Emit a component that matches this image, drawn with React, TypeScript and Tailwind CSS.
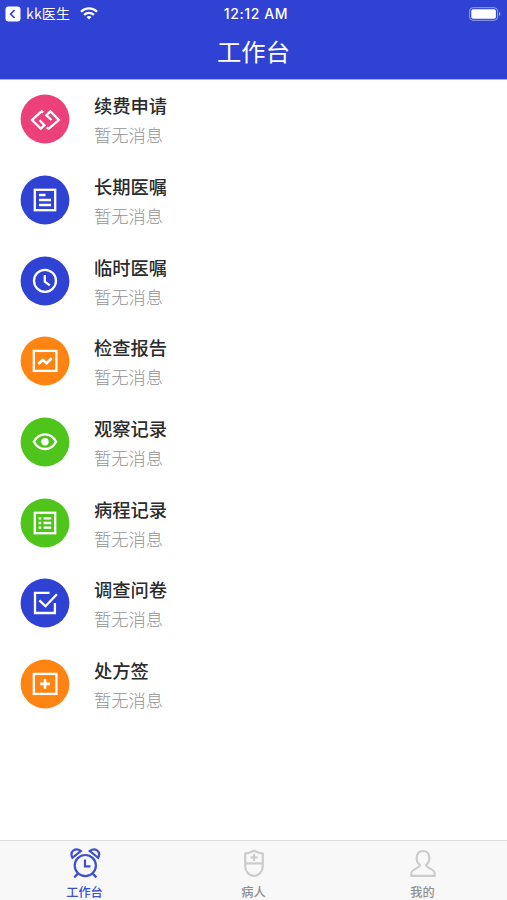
import type { ReactNode } from "react";

type Item = {
  title: string;
  color: string;
  icon: ReactNode;
};

const items: Item[] = [
  {
    title: "续费申请",
    color: "text-[#ec407a]",
    icon: (
      <>
        <path d="M23.2 18.4 L21.6 17.3 L12 26 L20.8 34.6 L24.4 31.2 L19.6 26.2" />
        <path d="M26.6 33.6 L28.8 34.6 L38.8 26 L30.4 17.4 L26.4 21.2 L31.4 26" />
      </>
    ),
  },
  {
    title: "长期医嘱",
    color: "text-[#2f42d3]",
    icon: (
      <>
        <rect x="14.8" y="14.8" width="20.4" height="20.4" />
        <path d="M19 20 h6.5 M19 25 h12 M19 30 h12" />
      </>
    ),
  },
  {
    title: "临时医嘱",
    color: "text-[#2f42d3]",
    icon: (
      <>
        <circle cx="25" cy="24.8" r="11" />
        <path d="M24.8 19 v6.6 l5 3.8" />
      </>
    ),
  },
  {
    title: "检查报告",
    color: "text-[#ff8412]",
    icon: (
      <>
        <rect x="13.8" y="14.9" width="22.6" height="20" />
        <path d="M18.4 28 l4.2 -4 l4 3.2 l5 -4.9" strokeWidth="2.6" />
      </>
    ),
  },
  {
    title: "观察记录",
    color: "text-[#4fc41a]",
    icon: (
      <>
        <path d="M13.9 24.7 C19 14.8 31 14.8 36.1 24.7 C31 34.4 19 34.4 13.9 24.7 Z" />
        <circle cx="25" cy="24.7" r="3.7" fill="white" stroke="none" />
      </>
    ),
  },
  {
    title: "病程记录",
    color: "text-[#4fc41a]",
    icon: (
      <>
        <rect x="14.8" y="14.8" width="20.4" height="20.4" />
        <path d="M18.6 20.4 h2.6 M18.6 25 h2.6 M18.6 29.6 h2.6 M23.6 20.4 h7.6 M23.6 25 h7.6 M23.6 29.6 h7.6" />
      </>
    ),
  },
  {
    title: "调查问卷",
    color: "text-[#2f42d3]",
    icon: (
      <>
        <path d="M29.5 14.9 H15 V35 H34.9 V25" />
        <path d="M19.3 22.4 l6.2 5.8 l11.4 -12" />
      </>
    ),
  },
  {
    title: "处方签",
    color: "text-[#ff8412]",
    icon: (
      <>
        <rect x="13.8" y="14.9" width="22.6" height="20" />
        <path d="M20.2 24.9 h9.6 M25 20.1 v9.6" strokeWidth="2.6" />
      </>
    ),
  },
];

function StatusBar() {
  return (
    <div className="grid h-[27px] grid-cols-3 items-center pl-[5px] pr-[6px] text-white">
      <div className="flex items-center">
        <svg width="16" height="16" viewBox="0 0 16 16">
          <rect x="0.5" y="0.5" width="15" height="15" rx="3" fill="white" />
          <path d="M9.6 4 L5.6 8 L9.6 12" fill="none" stroke="#2f42d3" strokeWidth="1.7" />
        </svg>
        <span className="mb-[2px] ml-[5px] text-[14px] leading-none tracking-[0.2px] whitespace-nowrap">kk医生</span>
        <svg className="ml-[10px]" width="18" height="13" viewBox="0 0 18 13" fill="none" stroke="white" strokeWidth="2.3">
          <path d="M1 4.8 C5.5 0.3 12.5 0.3 17 4.8" />
          <path d="M4.1 7.9 C6.9 5.2 11.1 5.2 13.9 7.9" />
          <path d="M9 12.6 L6.5 10 C7.9 8.8 10.1 8.8 11.5 10 Z" fill="white" stroke="none" />
        </svg>
      </div>
      <div className="pl-[6px] text-center font-['Inter'] text-[14px] leading-none font-medium tracking-[0.6px] whitespace-nowrap">
        12:12 AM
      </div>
      <svg className="justify-self-end" width="32" height="14" viewBox="0 0 32 14">
        <rect x="0.6" y="0.7" width="28" height="12.6" rx="3.4" fill="none" stroke="white" strokeOpacity="0.5" />
        <rect x="2.3" y="2.3" width="24.6" height="9.4" rx="1.8" fill="white" />
        <path d="M30 5 C31.8 5.6 31.8 8.4 30 9 Z" fill="white" fillOpacity="0.6" />
      </svg>
    </div>
  );
}

function Row({ title, color, icon }: Item) {
  return (
    <li className="flex h-[80.65px] items-center pl-5">
      <svg
        className={`shrink-0 ${color}`}
        width="50"
        height="50"
        viewBox="0 0 50 50"
        fill="none"
        stroke="white"
        strokeWidth="2.3"
      >
        <circle cx="25" cy="25" r="24.4" fill="currentColor" stroke="none" />
        {icon}
      </svg>
      <div className="mt-[2px] ml-6">
        <div className="text-[18.3px] leading-[29px] font-medium text-[#2b2b2b]">{title}</div>
        <div className="text-[17.3px] leading-[29px] font-light text-[#949494]">暂无消息</div>
      </div>
    </li>
  );
}

function Tab({ label, active, children }: { label: string; active?: boolean; children: ReactNode }) {
  return (
    <button
      className={`flex flex-1 flex-col items-center pt-[6px] ${active ? "text-[#3f50cf]" : "text-[#8f8f8f]"}`}
    >
      <svg
        className="shrink-0"
        width="34"
        height="34"
        viewBox="0 0 34 34"
        fill="none"
        strokeWidth="2.2"
        stroke={active ? "#3f50cf" : "#cccccc"}
      >
        {children}
      </svg>
      <span className="mt-[2px] text-[12.2px] leading-[18px] font-medium">{label}</span>
    </button>
  );
}

export default function App() {
  return (
    <div className="flex h-screen flex-col overflow-hidden bg-white font-['Noto_Sans_CJK_SC',sans-serif]">
      <header className="h-[79px] shrink-0 bg-[#2f42d3] shadow-[0_1px_0_#a4adeb]">
        <StatusBar />
        <h1 className="text-center text-[24.3px] leading-[48px] text-white">工作台</h1>
      </header>

      <ul className="flex-1">
        {items.map((item) => (
          <Row key={item.title} {...item} />
        ))}
      </ul>

      <nav className="flex h-[60px] shrink-0 border-t border-[#dcdcdc] bg-[#f8f8f8]">
        <Tab label="工作台" active>
          <circle cx="17.3" cy="18.6" r="10.6" />
          <path d="M17 12.4 v7 h5.5" />
          <path d="M10 26.6 l-3.8 3.8 M24.6 26.6 l3.8 3.8" />
          <path d="M4.4 10.8 C1.2 4 7.8 0.2 12.8 4 Z M30.2 10.8 C33.4 4 26.8 0.2 21.8 4 Z" />
        </Tab>
        <Tab label="病人">
          <path d="M8.2 6.6 Q12.8 5.9 17 3.8 Q21.2 5.9 25.8 6.6 V19 C25.8 24.8 22 28.8 17 28.8 C12 28.8 8.2 24.8 8.2 19 Z" />
          <path d="M8 16.4 h18 M13.5 10.4 h7 M17 6.9 v7" />
        </Tab>
        <Tab label="我的">
          <path d="M14 18 C8.6 14 10 4 17 4 C24 4 25.4 14 20 18 C20 21 28.6 22 28.6 26.2 V28.8 H5.4 V26.2 C5.4 22 14 21 14 18 Z" />
        </Tab>
      </nav>
    </div>
  );
}
